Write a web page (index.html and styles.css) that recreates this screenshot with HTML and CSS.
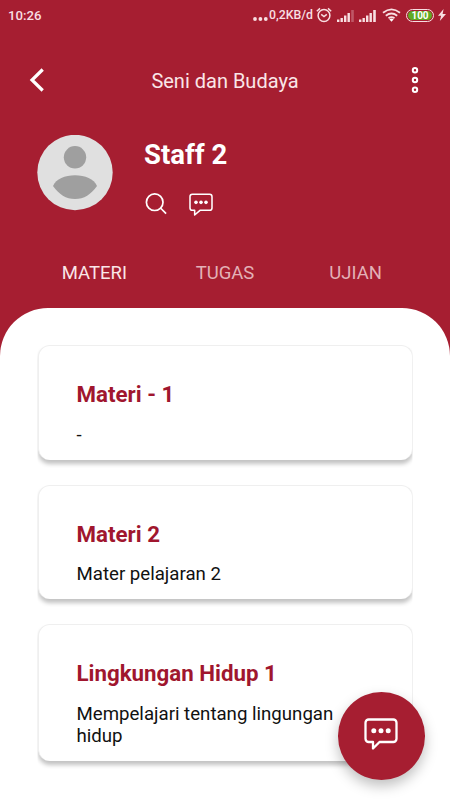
FILE: index.html
```html
<!DOCTYPE html>
<html lang="id">
<head>
<meta charset="utf-8">
<title>Seni dan Budaya</title>
<link rel="stylesheet" href="styles.css">
</head>
<body>
<div class="screen">
  <div class="status">
    <span class="time">10:26</span>
    <div class="indicators">
      <svg class="dots" width="15" height="15" viewBox="0 0 15 15"><circle cx="2" cy="11" r="1.9"/><circle cx="7.4" cy="11" r="1.9"/><circle cx="12.8" cy="11" r="1.9"/></svg>
      <span class="rate">0,2KB/d</span>
      <svg class="alarm line" width="16" height="16" viewBox="0 0 16 16"><circle cx="8" cy="8.5" r="5.9"/><path d="M.8 4.200 4 1.400M15.200 4.200 12 1.400M5.200 7.400 8 9.600l2.800-2.200"/></svg>
      <svg class="signal" width="18" height="13" viewBox="0 0 18 13"><path d="M0 10.5h2.4V13H0zM3.5 9h2.4v4H3.5zM7 6.5h2.4V13H7zM10.5 4h2.4v9h-2.4z"/><path class="faint" d="M14.2 1h2.6v12h-2.6z"/></svg>
      <svg class="signal second" width="18" height="13" viewBox="0 0 18 13"><path d="M0 10.5h2.4V13H0zM3.5 9h2.4v4H3.5zM7 6.5h2.4V13H7zM10.5 4h2.4v9h-2.4zM14.2 1h2.6v12h-2.6z"/></svg>
      <svg class="wifi line" width="19" height="14" viewBox="0 0 19 14"><path d="M1 4.8Q9.5-2 18 4.8M3.8 7.7q5.7-4.5 11.4 0M6.5 10.2q3-2.2 6 0"/><path class="solid" d="m7.3 11.3 2.2 2.5 2.2-2.5q-2.2-1.4-4.4 0z"/></svg>
      <span class="battery"><span class="level">100</span></span>
      <svg class="bolt" width="8" height="12" viewBox="0 0 8 12"><path d="M5.6 0 0 6.7h3.1L1.8 12 8 5H4.6z"/></svg>
    </div>
  </div>

  <header class="appbar">
    <svg class="back" width="16" height="24" viewBox="0 0 16 24"><path d="M13.700 1.500 3 12l10.700 10.500"/></svg>
    <h1 class="title">Seni dan Budaya</h1>
    <svg class="more" width="8" height="28" viewBox="0 0 8 28"><circle cx="4" cy="4.2" r="2.2"/><circle cx="4" cy="14" r="2.2"/><circle cx="4" cy="23.8" r="2.2"/></svg>
  </header>

  <section class="profile">
    <svg class="avatar" width="76" height="76" viewBox="0 0 76 76"><circle class="disc" cx="38" cy="37.500" r="37.700"/><circle cx="38" cy="22.300" r="11.200"/><path d="M16 51C19 44 28 40.300 38 40.300S57 44 60 51C54 59.500 47 64 38 64S22 59.500 16 51z"/></svg>
    <div class="who">
      <h2 class="name">Staff 2</h2>
      <div class="actions">
        <svg class="search" width="22" height="22" viewBox="0 0 22 22"><circle cx="9.7" cy="9.2" r="8.300"/><path d="m15.500 15 5.600 5.600"/></svg>
        <svg class="chat" width="24" height="24" viewBox="0 0 36 36"><path d="M8.500 26H5a3.5 3.5 0 0 1-3.5-3.5V5.5A3.5 3.5 0 0 1 5 2h26a3.5 3.5 0 0 1 3.5 3.5V22.500a3.500 3.500 0 0 1-3.500 3.500H16.500l-8 7V26z"/><g class="solid"><circle cx="10.500" cy="14" r="2.700"/><circle cx="18" cy="14" r="2.700"/><circle cx="25.500" cy="14" r="2.700"/></g></svg>
      </div>
    </div>
  </section>

  <nav class="tabs">
    <span class="tab active">MATERI</span>
    <span class="tab">TUGAS</span>
    <span class="tab">UJIAN</span>
  </nav>

  <main class="sheet">
    <article class="card"><h3>Materi - 1</h3><p>-</p></article>
    <article class="card"><h3>Materi 2</h3><p>Mater pelajaran 2</p></article>
    <article class="card"><h3>Lingkungan Hidup 1</h3><p>Mempelajari tentang lingungan hidup</p></article>
  </main>

  <div class="fab">
    <svg class="chat" width="34" height="34" viewBox="0 0 34 34"><path d="M9 24H4.700a3.200 3.200 0 0 1-3.200-3.200V4.700a3.200 3.200 0 0 1 3.200-3.200h24.600a3.200 3.200 0 0 1 3.200 3.200v16.100a3.200 3.200 0 0 1-3.200 3.200H15.500L9 30.500V24z"/><g class="solid"><circle cx="9.800" cy="12.800" r="2.500"/><circle cx="17" cy="12.800" r="2.500"/><circle cx="24.200" cy="12.800" r="2.500"/></g></svg>
  </div>
</div>
</body>
</html>
```
FILE: styles.css
```css
* { box-sizing: border-box; }
body { margin: 0; font-family: Roboto, "Liberation Sans", sans-serif; }
h1, h2, h3, p { margin: 0; }
svg { display: block; flex: none; }

.screen {
  position: relative;
  display: flex;
  flex-direction: column;
  width: 450px;
  height: 800px;
  overflow: hidden;
  background: #a61e31;
  color: #fff;
}

.status {
  display: flex;
  align-items: center;
  justify-content: space-between;
  height: 30px;
  padding: 0 4px 0 8px;
  color: #f8dfe2;
  font-size: 13.200px;
  font-weight: 500;
}
.indicators { display: flex; align-items: center; fill: #f8dfe2; }
.dots { margin: 1px 1px 0 0; }
.rate { width: 44px; font-size: 12.300px; white-space: nowrap; }
.alarm { margin-left: 3px; }
.line { fill: none; stroke: #f8dfe2; stroke-width: 1.500; }
.signal { margin-left: 5px; }
.second { margin-left: 4px; }
.faint { opacity: .3; }
.wifi { margin-left: 5px; stroke-width: 1.800; }
.solid { fill: #fff; stroke: none; }
.battery {
  display: flex;
  width: 28px;
  height: 13px;
  margin-left: 5px;
  padding: 1px;
  border: 1px solid #f8dfe2;
  border-radius: 7px;
}
.level {
  flex: 1;
  border-radius: 5px;
  background: #5faa22;
  color: #fff;
  font-size: 10px;
  font-weight: 700;
  line-height: 9.500px;
  text-align: center;
}
.bolt { margin-left: 4px; }

.appbar {
  display: flex;
  align-items: center;
  justify-content: space-between;
  height: 100px;
  padding: 0 31px 0 29px;
}
.back { fill: none; stroke: #fff; stroke-width: 3.200; }
.title { padding: 2px 6px 0 0; font-size: 20px; font-weight: 400; color: #fae6e8; }
.more { fill: none; stroke: #fff; stroke-width: 2; }

.profile { display: flex; gap: 31px; height: 114px; padding: 4.500px 37px 0; }
.avatar { fill: #9f9f9f; }
.disc { fill: #e0e0e0; }
.name { padding-top: 3px; font-size: 27.500px; line-height: 34px; font-weight: 700; }
.actions {
  display: flex;
  gap: 21.500px;
  padding: 21px 0 0 1px;
}
.search { fill: none; stroke: #fff; stroke-width: 1.700; }
.chat { fill: none; stroke: #fff; stroke-width: 2.300; stroke-linejoin: round; }

.tabs {
  display: grid;
  grid-template-columns: repeat(3, 1fr);
  align-items: center;
  height: 64px;
  padding: 0 29px 6px;
  text-align: center;
  font-size: 18.500px;
}
.tab { color: #e3b1b7; }
.active { color: #fae6e8; }

.sheet {
  display: flex;
  flex: 1;
  flex-direction: column;
  gap: 25px;
  padding: 37px 37.500px 0;
  border-radius: 48px 48px 0 0;
  background: #fff;
}
.card {
  flex: none;
  padding: 35px 38px 14px;
  border: 1.500px solid #efefef;
  border-bottom: 0;
  border-radius: 12px;
  background: #fff;
  box-shadow: 0 4px 4px rgba(0, 0, 0, .24);
  clip-path: inset(0 0 -9px 0);
}
.card h3 { font-size: 22.300px; line-height: 27px; font-weight: 700; color: #a0162e; }
.card p { margin-top: 15.500px; font-size: 18.650px; line-height: 22px; color: #111; }

.fab {
  position: absolute;
  left: 337.500px;
  top: 692px;
  display: grid;
  place-items: center;
  width: 87.500px;
  height: 88px;
  padding-bottom: 3px;
  border-radius: 50%;
  background: #a61e31;
  box-shadow: 0 6px 13px rgba(0, 0, 0, .25);
}
```
